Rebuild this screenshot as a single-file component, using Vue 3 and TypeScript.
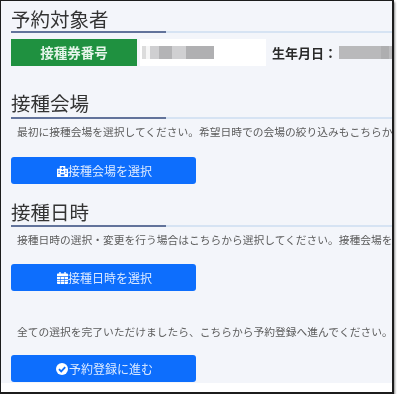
<script setup lang="ts">
const masks: { w: number; c: string }[] = [
  { w: 4, c: '#dcdcdc' },
  { w: 4, c: '#f6f6f6' },
  { w: 9, c: '#cfcfd1' },
  { w: 13, c: '#b4b4b6' },
  { w: 14, c: '#d0d0d2' },
  { w: 28, c: '#b0b0b2' },
]
const birth: { w: number; c: string }[] = [
  { w: 42, c: '#b9b9bb' },
  { w: 8, c: '#aeaeb0' },
  { w: 6, c: '#bdbdbf' },
]
</script>

<template>
  <div class="frame">
    <div class="content">
      <h2 class="heading first">予約対象者</h2>
      <div class="info">
        <div class="ticket">接種券番号</div>
        <div class="value">
          <span v-for="(m, i) in masks" :key="i" class="mask" :style="{ width: m.w + 'px', background: m.c }"></span>
        </div>
        <div class="birth-label">生年月日：</div>
        <div class="birth">
          <span v-for="(m, i) in birth" :key="i" class="mask" :style="{ width: m.w + 'px', background: m.c }"></span>
        </div>
      </div>

      <h2 class="heading venue">接種会場</h2>
      <p class="desc">最初に接種会場を選択してください。希望日時での会場の絞り込みもこちらから行えます。</p>
      <button class="action a1" type="button">
        <svg class="icon" viewBox="0 0 12 13" width="11" height="12">
          <path fill="#fff" d="M3 1h6v3h3v9H8v-3H4v3H0V4h3z" />
          <path fill="#0d6efd" d="M5.400 2h1.200v1H8v1H6.600v1H5.400V4H4V3h1.400zM1.500 6h1.500v1.200H1.500zM9 6h1.500v1.200H9zM1.500 8.500h1.500v1.200H1.500zM9 8.500h1.500v1.200H9zM4.500 6.500h3v1.500h-3z" />
          <path fill="none" stroke="#fff" d="M0 12.600h12" />
        </svg>
        <span>接種会場を選択</span>
      </button>

      <h2 class="heading date">接種日時</h2>
      <p class="desc">接種日時の選択・変更を行う場合はこちらから選択してください。接種会場を選択後に</p>
      <button class="action a2" type="button">
        <svg class="icon" viewBox="0 0 12 13" width="11" height="12">
          <path fill="#fff" d="M2.500 0h1.500v1.500h4V0h1.500v1.500H11A1 1 0 0 1 12 2.500V4.500H0V2.500A1 1 0 0 1 1 1.500h1.500zM0 5.300h12V12a1 1 0 0 1-1 1H1a1 1 0 0 1-1-1z" />
          <path fill="#0d6efd" d="M3.600 5.300h.6V13h-.6zM7.800 5.300h.6V13h-.6zM0 7.700h12v.6H0zM0 10.200h12v.6H0z" />
        </svg>
        <span>接種日時を選択</span>
      </button>

      <p class="desc final">全ての選択を完了いただけましたら、こちらから予約登録へ進んでください。</p>
      <button class="action a3" type="button">
        <svg class="icon check" viewBox="0 0 12 12" width="12" height="12">
          <circle cx="6" cy="6" r="6" fill="#fff" />
          <path fill="none" stroke="#0d6efd" stroke-width="1.800" d="M3 6.200l2.200 2.200L9.200 4.200" />
        </svg>
        <span>予約登録に進む</span>
      </button>
    </div>
  </div>
</template>

<style scoped>
.frame {
  width: 394px;
  height: 394px;
  box-sizing: border-box;
  border: 1px solid #1c1c1c;
  border-right-width: 2px;
  border-bottom-width: 2px;
  background: #fff;
  box-shadow: 1px 2px 2px #8a8a8a;
  overflow: hidden;
  font-family: "Noto Sans CJK JP", "Liberation Sans", sans-serif;
}
.content {
  height: 382px;
  padding-left: 10px;
  background: #f3f5fa;
  overflow: hidden;
  filter: blur(0.45px);
}
.heading {
  position: relative;
  margin: 0;
  height: 32px;
  box-sizing: border-box;
  border-bottom: 2px solid #d6e3f3;
  font-size: 19.5px;
  line-height: 26px;
  font-weight: 400;
  color: #333;
}
.heading::after {
  content: "";
  position: absolute;
  left: 0;
  bottom: -2px;
  width: 155px;
  height: 2px;
  background: #62739b;
}
.first { padding-top: 5px; }
.venue { margin-top: 19px; padding-top: 5px; height: 34px; }
.date { margin-top: 15px; height: 28px; }
.info {
  display: flex;
  align-items: center;
  height: 27px;
  margin-top: 6px;
}
.ticket {
  flex: none;
  width: 126px;
  height: 27px;
  box-sizing: border-box;
  background: #1f9140;
  color: #e6f5ea;
  font-size: 13.500px;
  font-weight: 700;
  line-height: 26px;
  text-align: center;
}
.value {
  flex: none;
  width: 126px;
  height: 27px;
  margin-left: 3px;
  padding-left: 2px;
  box-sizing: border-box;
  background: #fff;
  display: flex;
  align-items: center;
}
.mask {
  display: block;
  height: 13px;
  flex: none;
}
.birth-label {
  flex: none;
  margin-left: 6px;
  font-size: 13px;
  font-weight: 700;
  color: #2a2a2a;
  white-space: nowrap;
  width: 67px;
}
.birth { display: flex; align-items: center; }
.desc {
  margin: 5px 0 0 6px;
  font-size: 10.750px;
  line-height: 16px;
  color: #5c5c5c;
  white-space: nowrap;
}
.final { margin-top: 33px; }
.action {
  display: flex;
  align-items: center;
  justify-content: center;
  width: 185px;
  height: 27px;
  margin: 0;
  padding: 0 0 0 2px;
  border: 0;
  border-radius: 3px;
  background: #0d6efd;
  color: #dceaff;
  font-family: inherit;
  font-size: 12px;
  line-height: 1;
}
.a1 { margin-top: 17px; }
.a2 { margin-top: 16px; }
.a3 { margin-top: 15px; }
.icon { flex: none; }
.check { margin-right: 1px; }
</style>
